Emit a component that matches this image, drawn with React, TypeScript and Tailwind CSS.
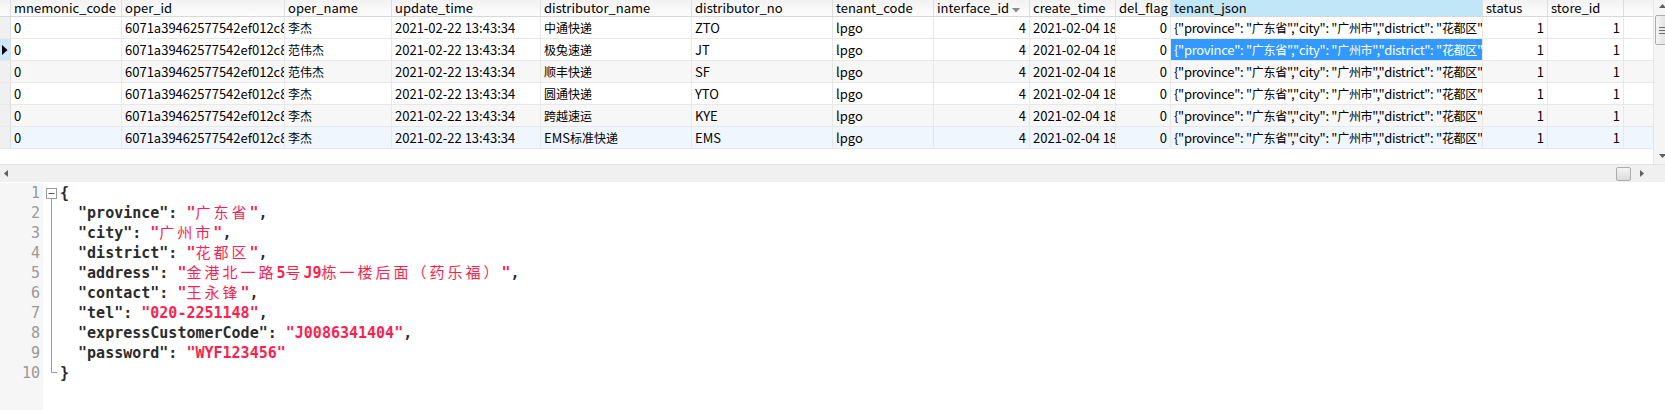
import React from "react";

type Column = { key: string; width: number; align?: "left" | "right" };

const columns: Column[] = [
  { key: "mnemonic_code", width: 111 },
  { key: "oper_id", width: 163 },
  { key: "oper_name", width: 107 },
  { key: "update_time", width: 149 },
  { key: "distributor_name", width: 151 },
  { key: "distributor_no", width: 141 },
  { key: "tenant_code", width: 101 },
  { key: "interface_id", width: 96, align: "right" },
  { key: "create_time", width: 86 },
  { key: "del_flag", width: 55, align: "right" },
  { key: "tenant_json", width: 312 },
  { key: "status", width: 65, align: "right" },
  { key: "store_id", width: 76, align: "right" },
];

const json =
  '{"province": "广东省","city": "广州市","district": "花都区","address": "金港北一路5号J9栋一楼后面（药乐福）"}';

const makeRow = (operName: string, name: string, no: string) => ({
  mnemonic_code: "0",
  oper_id: "6071a39462577542ef012c8d1e0b9a3f",
  oper_name: operName,
  update_time: "2021-02-22 13:43:34",
  distributor_name: name,
  distributor_no: no,
  tenant_code: "lpgo",
  interface_id: "4",
  create_time: "2021-02-04 18:12:26",
  del_flag: "0",
  tenant_json: json,
  status: "1",
  store_id: "1",
});

const rows: Record<string, string>[] = [
  makeRow("李杰", "中通快递", "ZTO"),
  makeRow("范伟杰", "极兔速递", "JT"),
  makeRow("范伟杰", "顺丰快递", "SF"),
  makeRow("李杰", "圆通快递", "YTO"),
  makeRow("李杰", "跨越速运", "KYE"),
  makeRow("李杰", "EMS标准快递", "EMS"),
];

const rowBg = ["bg-white", "bg-white", "bg-[#f7f7f7]", "bg-white", "bg-[#f7f7f7]", "bg-[#eff6fd]"];

const codeLines: { key?: string; value?: string; comma?: boolean; raw?: string }[] = [
  { raw: "{" },
  { key: "province", value: "广东省", comma: true },
  { key: "city", value: "广州市", comma: true },
  { key: "district", value: "花都区", comma: true },
  { key: "address", value: "金港北一路5号J9栋一楼后面（药乐福）", comma: true },
  { key: "contact", value: "王永锋", comma: true },
  { key: "tel", value: "020-2251148", comma: true },
  { key: "expressCustomerCode", value: "J0086341404", comma: true },
  { key: "password", value: "WYF123456" },
  { raw: "}" },
];

const wide = /([\u3000-\u9fff\uff00-\uffef]+)/;

// CJK glyphs take two columns in the editor
const monoText = (s: string) =>
  s.split(wide).map((part, i) =>
    wide.test(part) ? (
      <span key={i} className="font-normal tracking-[3px]">
        {part}
      </span>
    ) : (
      part
    )
  );

// the grid draws CJK a little smaller than latin text
const cellText = (s: string) =>
  s.split(wide).map((part, i) =>
    wide.test(part) ? (
      <span key={i} className="text-[12px]">
        {part}
      </span>
    ) : (
      part
    )
  );

const HeaderCell = ({ col }: { col: Column }) => (
  <div
    style={{ width: col.width }}
    className={`relative flex shrink-0 items-center overflow-hidden whitespace-nowrap border-r border-[#dedede] pl-[3px] leading-[16px] ${
      col.key === "tenant_json" ? "bg-[#c0e6f8]" : ""
    }`}
  >
    {col.key}
    {col.key === "interface_id" && (
      <svg width="8" height="5" className="absolute right-[9px] top-[8px]">
        <path d="M0 0 L8 0 L4 4.5 Z" fill="#8a8a8a" />
      </svg>
    )}
  </div>
);

const App = () => {
  return (
    <div className="h-[410px] w-[1665px] overflow-hidden bg-white">
      {/* grid */}
      <div className="flex h-[164px]">
        <div className="w-[1653px] shrink-0 font-['Noto_Sans_CJK_SC','Noto_Sans',sans-serif] text-[13px] text-black">
          <div className="flex h-[17px] border-b border-[#d8d8d8] bg-gradient-to-b from-[#f2f2f2] to-[#fdfdfd]">
            <div className="w-[11px] shrink-0 border-r border-[#dedede]" />
            {columns.map((col) => (
              <HeaderCell key={col.key} col={col} />
            ))}
          </div>
          {rows.map((row, r) => (
            <div key={r} className={`flex h-[22px] border-b border-[#e8e8e8] ${rowBg[r]}`}>
              <div
                className={`flex w-[11px] shrink-0 items-center border-r border-[#dedede] ${
                  r === 1 ? "bg-[#cde8fb]" : "bg-[#f0f0f0]"
                }`}
              >
                {r === 1 && (
                  <svg width="6" height="10" className="ml-[2px]">
                    <path d="M0 0 L5.5 5 L0 10 Z" fill="#000" />
                  </svg>
                )}
              </div>
              {columns.map((col) => {
                const selected = r === 1 && col.key === "tenant_json";
                return (
                  <div
                    key={col.key}
                    style={{ width: col.width }}
                    className={`flex shrink-0 items-center overflow-hidden whitespace-nowrap border-r border-[#e8e8e8] ${
                      col.align === "right" ? "justify-end pr-[3px]" : "pl-[3px]"
                    } ${col.key === "tenant_json" ? "tracking-[-0.3px]" : ""} ${
                      selected ? "bg-[#3399ff] text-white" : ""
                    }`}
                  >
                    <span>{cellText(row[col.key])}</span>
                  </div>
                );
              })}
            </div>
          ))}
        </div>
        {/* vertical scrollbar */}
        <div className="flex w-[17px] shrink-0 flex-col items-center border-l border-[#e6e6e6] bg-[#f5f5f5]">
          <svg width="7" height="4" className="mt-[4px]">
            <path d="M0 4 L3.5 0 L7 4 Z" fill="#606060" />
          </svg>
          <div className="mt-[7px] flex h-[30px] w-[15px] flex-col items-center justify-center gap-[2px] rounded-[2px] border border-[#acacac] bg-gradient-to-r from-[#f4f4f4] to-[#dcdcdc]">
            <div className="h-px w-[7px] bg-[#707070]" />
            <div className="h-px w-[7px] bg-[#707070]" />
            <div className="h-px w-[7px] bg-[#707070]" />
          </div>
          <div className="flex-1" />
          <svg width="7" height="4" className="mb-[6px]">
            <path d="M0 0 L7 0 L3.5 4 Z" fill="#606060" />
          </svg>
        </div>
      </div>

      {/* horizontal scrollbar */}
      <div className="flex h-[18px] items-center border-t border-[#e4e4e4] bg-[#f0f0f0] pr-[17px]">
        <svg width="4" height="7" className="ml-[4px]">
          <path d="M4 0 L0 3.5 L4 7 Z" fill="#606060" />
        </svg>
        <div className="flex-1" />
        <div className="h-[14px] w-[15px] rounded-[2px] border border-[#acacac] bg-gradient-to-b from-[#f4f4f4] to-[#dcdcdc]" />
        <svg width="4" height="7" className="ml-[9px] mr-[4px]">
          <path d="M0 0 L4 3.5 L0 7 Z" fill="#606060" />
        </svg>
      </div>

      {/* json editor */}
      <div className="flex h-[228px] pt-px font-['DejaVu_Sans_Mono','Noto_Sans_CJK_SC',monospace] text-[15px] leading-[20px]">
        <div className="w-[43px] shrink-0 bg-[#f6f6f6] pr-[3px] text-right text-[#999999]">
          {codeLines.map((_, i) => (
            <div key={i}>{i + 1}</div>
          ))}
        </div>
        <svg width="17" height="200" className="shrink-0">
          <rect x="3.5" y="5.5" width="10" height="10" fill="#fff" stroke="#9a9a9a" />
          <line x1="5.5" y1="10.5" x2="11.5" y2="10.5" stroke="#555" />
          <path d="M8.5 16 L8.5 189.5 L14 189.5" fill="none" stroke="#9a9a9a" />
        </svg>
        <div className="whitespace-pre font-bold text-[#2b2b2b]">
          {codeLines.map((line, i) => (
            <div key={i}>
              {line.raw ?? (
                <>
                  {"  "}"{line.key}":{" "}
                  <span className="text-[#ff1f4f]">"{monoText(line.value ?? "")}"</span>
                  {line.comma && ","}
                </>
              )}
            </div>
          ))}
        </div>
      </div>
    </div>
  );
};

export default App;
